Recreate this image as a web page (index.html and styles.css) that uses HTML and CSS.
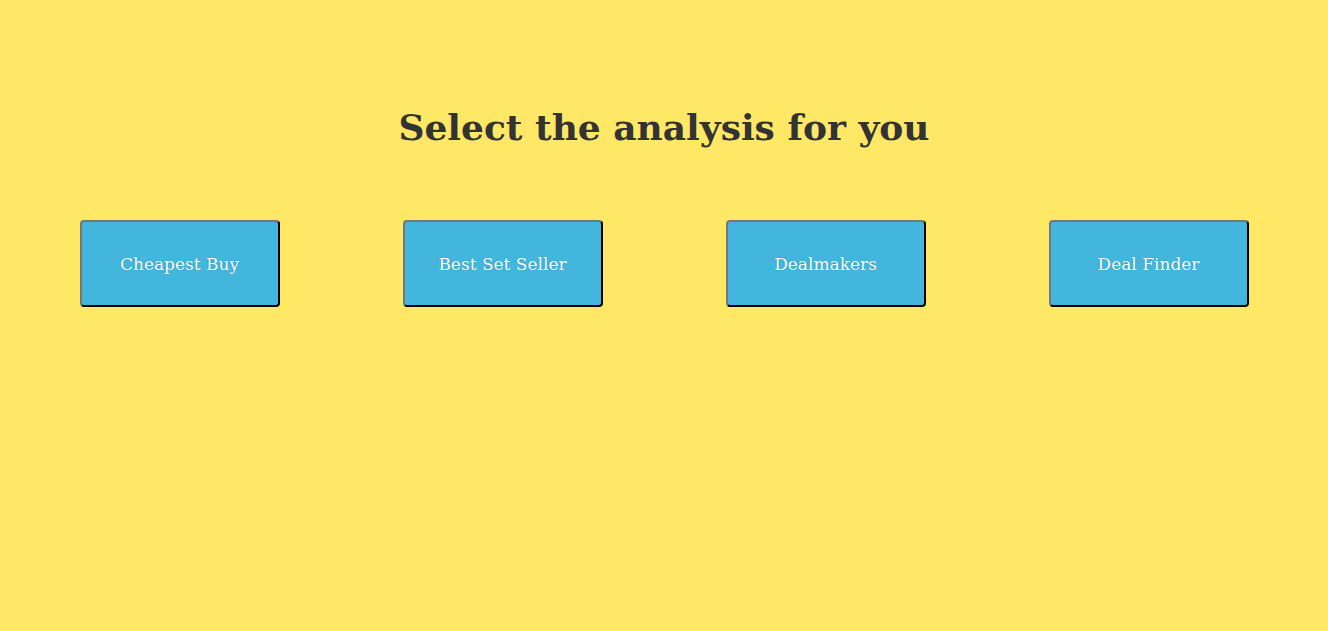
FILE: index.html
```html
<!DOCTYPE html>
<html>
<head>
<meta charset="utf-8">
<link rel="stylesheet" href="styles.css">
</head>
<body>
<main class="page">
  <h1 class="title">Select the analysis for you</h1>
  <div class="choices">
    <button class="choice">Cheapest Buy</button>
    <button class="choice">Best Set Seller</button>
    <button class="choice">Dealmakers</button>
    <button class="choice">Deal Finder</button>
  </div>
</main>
</body>
</html>
```
FILE: styles.css
```css
html, body {
  margin: 0;
  padding: 0;
  background: #ffe866;
  height: 100%;
}
body {
  font-family: "DejaVu Serif", Georgia, serif;
}
.page {
  padding: 0 18px;
}
.title {
  margin: 0;
  padding-top: 101px;
  text-align: center;
  font-size: 36px;
  line-height: 52px;
  font-weight: bold;
  color: #333333;
}
.choices {
  display: flex;
  justify-content: space-around;
  margin-top: 67px;
}
.choice {
  width: 200px;
  height: 87px;
  background: #42b6dc;
  border: 2px outset #767676;
  border-color: #767676 #222 #222 #767676;
  border-radius: 4px;
  color: #fff;
  font-family: "DejaVu Serif", Georgia, serif;
  font-size: 17px;
  text-shadow: 0 0 1px rgba(0,0,0,0.35);
  padding: 0;
}
```
